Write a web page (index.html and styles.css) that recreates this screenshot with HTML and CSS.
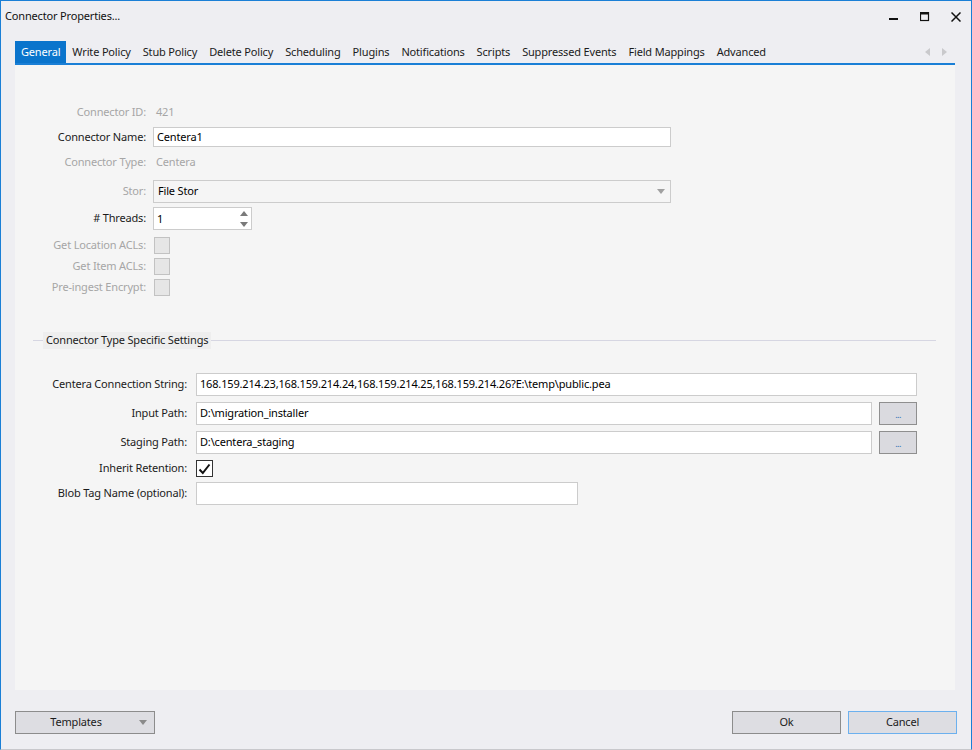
FILE: index.html
```html
<!DOCTYPE html>
<html>
<head>
<meta charset="utf-8">
<title>Connector Properties</title>
<link rel="stylesheet" href="styles.css">
</head>
<body>
<div class="window">
  <div class="titlebar">
    <div class="title">Connector Properties...</div>
    <div class="controls">
      <span class="ctl"><svg width="10" height="10" viewBox="0 0 10 10"><rect x="0" y="6" width="9" height="2" fill="#111"/></svg></span>
      <span class="ctl"><svg width="10" height="10" viewBox="0 0 10 10"><rect x="0.5" y="0.5" width="8" height="8" fill="none" stroke="#111" stroke-width="1.2"/><rect x="0" y="0" width="9" height="2.5" fill="#111"/></svg></span>
      <span class="ctl"><svg width="10" height="10" viewBox="0 0 10 10"><path d="M0.5 0.5 L9.5 9.5 M9.5 0.5 L0.5 9.5" stroke="#111" stroke-width="1.5"/></svg></span>
    </div>
  </div>

  <div class="tabs">
    <span class="tab active">General</span>
    <span class="tab">Write Policy</span>
    <span class="tab">Stub Policy</span>
    <span class="tab">Delete Policy</span>
    <span class="tab">Scheduling</span>
    <span class="tab">Plugins</span>
    <span class="tab">Notifications</span>
    <span class="tab">Scripts</span>
    <span class="tab">Suppressed Events</span>
    <span class="tab">Field Mappings</span>
    <span class="tab">Advanced</span>
    <span class="tab-arrows">
      <svg width="6" height="8" viewBox="0 0 6 8"><path d="M5 0 L0 4 L5 8 Z" fill="#c9c9cc"/></svg>
      <svg width="6" height="8" viewBox="0 0 6 8"><path d="M1 0 L6 4 L1 8 Z" fill="#c9c9cc"/></svg>
    </span>
  </div>

  <div class="panel">
    <div class="form-top">
      <div class="row r-id"><span class="lbl dis">Connector ID:</span><span class="val">421</span></div>
      <div class="row r-name"><span class="lbl">Connector Name:</span><div class="input w-top">Centera1</div></div>
      <div class="row r-type"><span class="lbl dis">Connector Type:</span><span class="val">Centera</span></div>
      <div class="row r-stor"><span class="lbl dis">Stor:</span>
        <div class="combo w-top"><span>File Stor</span>
          <svg width="8" height="5" viewBox="0 0 8 5"><path d="M0 0 L8 0 L4 5 Z" fill="#a0a0a0"/></svg>
        </div>
      </div>
      <div class="row r-threads"><span class="lbl">&#35; Threads:</span>
        <div class="spinner"><span class="spin-val">1</span>
          <span class="spin-arrows">
            <svg width="8" height="5" viewBox="0 0 8 5"><path d="M0 5 L8 5 L4 0 Z" fill="#7a7a7a"/></svg>
            <svg width="8" height="5" viewBox="0 0 8 5"><path d="M0 0 L8 0 L4 5 Z" fill="#7a7a7a"/></svg>
          </span>
        </div>
      </div>
      <div class="row r-chk first"><span class="lbl dis">Get Location ACLs:</span><span class="chk disabled"></span></div>
      <div class="row r-chk"><span class="lbl dis">Get Item ACLs:</span><span class="chk disabled"></span></div>
      <div class="row r-chk"><span class="lbl dis">Pre-ingest Encrypt:</span><span class="chk disabled"></span></div>
    </div>

    <div class="group-head">
      <span class="gline short"></span>
      <span class="gtext">Connector Type Specific Settings</span>
      <span class="gline long"></span>
    </div>

    <div class="form-bottom">
      <div class="brow b-first"><span class="blbl">Centera Connection String:</span><div class="input tall w-full">168.159.214.23,168.159.214.24,168.159.214.25,168.159.214.26?E:\temp\public.pea</div></div>
      <div class="brow"><span class="blbl">Input Path:</span><div class="input tall w-path">D:\migration_installer</div><span class="browse">...</span></div>
      <div class="brow"><span class="blbl">Staging Path:</span><div class="input tall w-path">D:\centera_staging</div><span class="browse">...</span></div>
      <div class="brow b-chk"><span class="blbl">Inherit Retention:</span>
        <span class="chk checked"><svg width="13" height="12" viewBox="0 0 13 12"><path d="M1.5 6.5 L4.8 10 L11.5 1.5" fill="none" stroke="#111" stroke-width="2"/></svg></span>
      </div>
      <div class="brow"><span class="blbl">Blob Tag Name (optional):</span><div class="input tall w-blob"></div></div>
    </div>
  </div>

  <div class="footer">
    <div class="btn templates"><span class="tlabel">Templates</span>
      <svg width="8" height="5" viewBox="0 0 8 5"><path d="M0 0 L8 0 L4 5 Z" fill="#8a8a8a"/></svg>
    </div>
    <div class="spacer"></div>
    <div class="btn ok">Ok</div>
    <div class="btn cancel">Cancel</div>
  </div>
</div>
</body>
</html>
```

FILE: styles.css
```css
* { box-sizing: border-box; }
html, body {
  margin: 0;
  padding: 0;
  background: #eeeef2;
}
body {
  font-family: "Noto Sans", "Open Sans", sans-serif;
  font-size: 11px;
  letter-spacing: -0.17px;
  color: #1b1b1b;
}
.window {
  width: 972px;
  height: 750px;
  border-top: 1px solid #1a7fd6;
  border-left: 1px solid #1a7fd6;
  border-right: 1px solid #1a7fd6;
  border-bottom: 1px solid #c8c8cc;
  display: flex;
  flex-direction: column;
  background: #eeeef2;
}
.titlebar {
  height: 31px;
  display: flex;
  align-items: center;
  padding-left: 4px;
}
.title {
  flex: 1;
  color: #111;
  padding-bottom: 2px;
}
.controls {
  display: flex;
  align-items: center;
}
.ctl {
  width: 31px;
  height: 20px;
  display: flex;
  align-items: center;
  justify-content: center;
}

.tabs {
  margin-top: 9px;
  margin-left: 14px;
  width: 940px;
  height: 24px;
  display: flex;
  align-items: stretch;
  border-bottom: 2px solid #1a7fd6;
}
.tab {
  padding: 0 6px 2px;
  display: flex;
  align-items: center;
  color: #1b1b1b;
  white-space: nowrap;
}
.tab.active {
  background: #0a74cc;
  color: #fff;
}
.tab-arrows {
  margin-left: auto;
  margin-right: 8px;
  display: flex;
  align-items: center;
  gap: 10px;
}

.panel {
  margin-left: 14px;
  width: 940px;
  height: 625px;
  background: #f5f5f5;
  padding-top: 37px;
}
.form-top {
  display: flex;
  flex-direction: column;
}
.row {
  display: flex;
  align-items: center;
  gap: 7px;
}
.lbl {
  width: 131px;
  text-align: right;
  white-space: nowrap;
  padding-bottom: 2px;
}
.lbl.dis { color: #a6a6a6; }
.val { color: #a6a6a6; padding: 0 0 2px 3px; }
.r-id { height: 20px; }
.r-name { height: 20px; margin-top: 5px; }
.r-type { height: 20px; margin-top: 5px; }
.r-stor { height: 23px; margin-top: 8px; }
.r-threads { height: 23px; margin-top: 4px; }
.r-chk { height: 17px; margin-top: 4px; }
.r-chk.first { margin-top: 7px; }

.input {
  height: 20px;
  background: #fff;
  border: 1px solid #cccccc;
  padding: 0 0 2px 3px;
  display: flex;
  align-items: center;
  color: #000;
  white-space: nowrap;
  overflow: hidden;
}
.input.tall { height: 23px; }
.w-top { width: 518px; }
.combo {
  height: 23px;
  border: 1px solid #cccccc;
  background: #f5f5f5;
  display: flex;
  align-items: center;
  justify-content: space-between;
  padding: 0 5px 0 4px;
  color: #000;
}
.combo span { padding-bottom: 2px; }
.spinner {
  width: 99px;
  height: 23px;
  background: #fff;
  border: 1px solid #cccccc;
  display: flex;
  align-items: center;
  justify-content: space-between;
  padding: 0 3px;
  color: #000;
}
.spin-val { padding-bottom: 1px; }
.spin-arrows {
  display: flex;
  flex-direction: column;
  gap: 6px;
}
.chk {
  width: 17px;
  height: 17px;
  border: 1px solid #333;
  background: #fff;
  display: flex;
  align-items: center;
  justify-content: center;
}
.chk.disabled {
  margin-left: 1px;
  width: 16px;
  border-color: #c2c2c2;
  background: #e6e6e6;
}

.group-head {
  margin: 36px 19px 0 18px;
  height: 17px;
  display: flex;
  align-items: center;
}
.gline {
  height: 1px;
  background: #d6d6e2;
}
.gline.short { width: 10px; }
.gline.long { flex: 1; }
.gtext {
  background: #eeeeee;
  padding: 0 3px 2px;
  height: 17px;
  display: flex;
  align-items: center;
  white-space: nowrap;
}

.form-bottom {
  margin-top: 24px;
  display: flex;
  flex-direction: column;
}
.brow {
  display: flex;
  align-items: center;
  height: 23px;
  margin-top: 6px;
}
.brow.b-first { margin-top: 0; }
.brow.b-chk { height: 17px; margin-top: 6px; }
.brow.b-chk + .brow { margin-top: 5px; }
.blbl {
  width: 172px;
  margin-right: 9px;
  text-align: right;
  white-space: nowrap;
  padding-bottom: 2px;
}
.w-full { width: 721px; }
.w-path { width: 676px; }
.w-blob { width: 382px; }
.browse {
  margin-left: 7px;
  width: 38px;
  height: 23px;
  background: #dadadf;
  border: 1px solid #8f8f8f;
  display: flex;
  align-items: center;
  justify-content: center;
  color: #2a6db5;
  font-size: 9px;
  letter-spacing: -0.6px;
  line-height: 1;
  padding-top: 2px;
}

.footer {
  margin-top: 21px;
  margin-left: 14px;
  margin-right: 14px;
  display: flex;
  align-items: center;
}
.spacer { flex: 1; }
.btn {
  height: 23px;
  background: #dddde2;
  border: 1px solid #8c8c8c;
  display: flex;
  align-items: center;
  justify-content: center;
  color: #1b1b1b;
  padding-bottom: 2px;
}
.templates {
  width: 140px;
  position: relative;
}
.templates svg {
  position: absolute;
  right: 7px;
  top: 8px;
}
.tlabel { margin-left: -18px; }
.ok { width: 109px; }
.cancel {
  width: 109px;
  margin-left: 7px;
  border-color: #6cb0ee;
}
```
